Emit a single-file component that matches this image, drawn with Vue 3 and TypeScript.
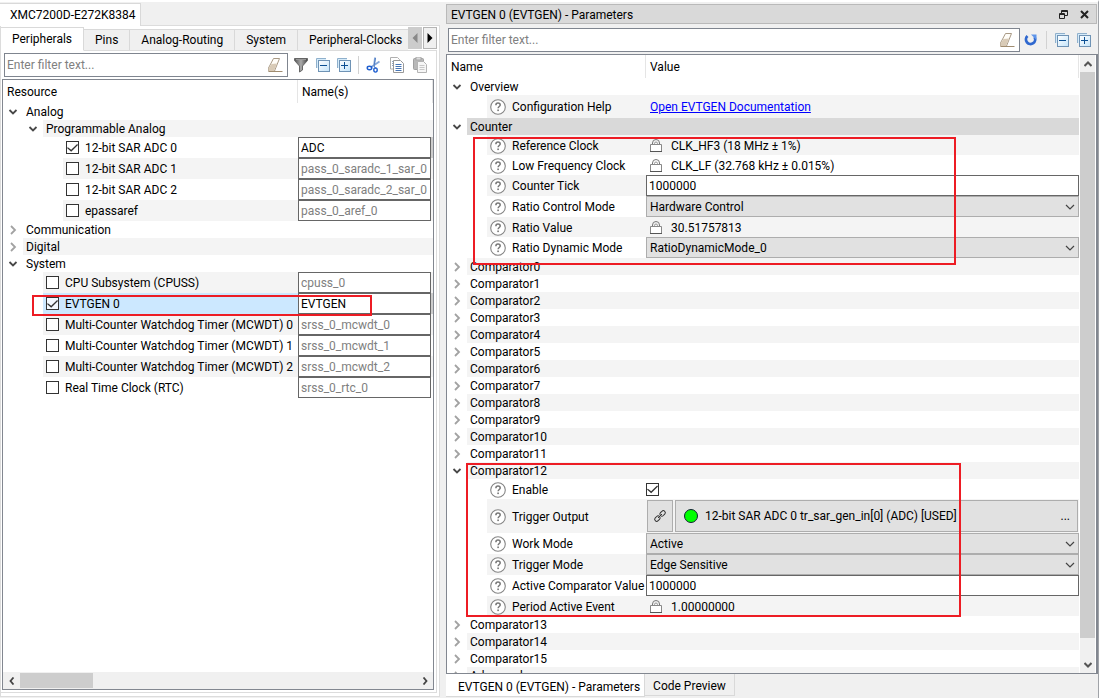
<script setup lang="ts">
import { ref } from 'vue'

interface ResourceRow {
  label: string
  level: number
  open?: boolean
  leaf?: boolean
  checked?: boolean
  name?: string
  selected?: boolean
}

interface ParamRow {
  label: string
  kind: 'group' | 'link' | 'locked' | 'text' | 'select' | 'check' | 'trigger'
  value?: string
  open?: boolean
  height?: 'h20' | 'h21' | 'h23' | 'h34'
  current?: boolean
}

const tabs = ['Peripherals', 'Pins', 'Analog-Routing', 'System', 'Peripheral-Clocks']
const activeTab = ref('Peripherals')
const leftFilter = ref('')
const rightFilter = ref('')

const resources = ref<ResourceRow[]>([
  { label: 'Analog', level: 0, open: true },
  { label: 'Programmable Analog', level: 1, open: true },
  { label: '12-bit SAR ADC 0', level: 2, leaf: true, checked: true, name: 'ADC' },
  { label: '12-bit SAR ADC 1', level: 2, leaf: true, checked: false, name: 'pass_0_saradc_1_sar_0' },
  { label: '12-bit SAR ADC 2', level: 2, leaf: true, checked: false, name: 'pass_0_saradc_2_sar_0' },
  { label: 'epassaref', level: 2, leaf: true, checked: false, name: 'pass_0_aref_0' },
  { label: 'Communication', level: 0, open: false },
  { label: 'Digital', level: 0, open: false },
  { label: 'System', level: 0, open: true },
  { label: 'CPU Subsystem (CPUSS)', level: 1, leaf: true, checked: false, name: 'cpuss_0' },
  { label: 'EVTGEN 0', level: 1, leaf: true, checked: true, name: 'EVTGEN', selected: true },
  { label: 'Multi-Counter Watchdog Timer (MCWDT) 0', level: 1, leaf: true, checked: false, name: 'srss_0_mcwdt_0' },
  { label: 'Multi-Counter Watchdog Timer (MCWDT) 1', level: 1, leaf: true, checked: false, name: 'srss_0_mcwdt_1' },
  { label: 'Multi-Counter Watchdog Timer (MCWDT) 2', level: 1, leaf: true, checked: false, name: 'srss_0_mcwdt_2' },
  { label: 'Real Time Clock (RTC)', level: 1, leaf: true, checked: false, name: 'srss_0_rtc_0' },
])

const comparators = (from: number, to: number): ParamRow[] =>
  Array.from({ length: to - from + 1 }, (_, i) => ({
    label: `Comparator${from + i}`,
    kind: 'group' as const,
    open: false,
  }))

const params = ref<ParamRow[]>([
  { label: 'Overview', kind: 'group', open: true },
  { label: 'Configuration Help', kind: 'link', value: 'Open EVTGEN Documentation', height: 'h23' },
  { label: 'Counter', kind: 'group', open: true, current: true },
  { label: 'Reference Clock', kind: 'locked', value: 'CLK_HF3 (18 MHz ± 1%)', height: 'h20' },
  { label: 'Low Frequency Clock', kind: 'locked', value: 'CLK_LF (32.768 kHz ± 0.015%)', height: 'h20' },
  { label: 'Counter Tick', kind: 'text', value: '1000000', height: 'h21' },
  { label: 'Ratio Control Mode', kind: 'select', value: 'Hardware Control', height: 'h21' },
  { label: 'Ratio Value', kind: 'locked', value: '30.51757813', height: 'h20' },
  { label: 'Ratio Dynamic Mode', kind: 'select', value: 'RatioDynamicMode_0', height: 'h21' },
  ...comparators(0, 11),
  { label: 'Comparator12', kind: 'group', open: true },
  { label: 'Enable', kind: 'check', height: 'h20' },
  { label: 'Trigger Output', kind: 'trigger', value: '12-bit SAR ADC 0 tr_sar_gen_in[0] (ADC) [USED]', height: 'h34' },
  { label: 'Work Mode', kind: 'select', value: 'Active', height: 'h21' },
  { label: 'Trigger Mode', kind: 'select', value: 'Edge Sensitive', height: 'h21' },
  { label: 'Active Comparator Value', kind: 'text', value: '1000000', height: 'h21' },
  { label: 'Period Active Event', kind: 'locked', value: '1.00000000', height: 'h20' },
  ...comparators(13, 15),
  { label: 'Advanced', kind: 'group', open: false },
])
const enabled = ref(true)
</script>

<template>
  <div class="app">
    <svg class="defs" aria-hidden="true">
      <defs>
        <linearGradient id="gFunnel" x1="0" x2="1"><stop offset="0" stop-color="#555" /><stop offset=".5" stop-color="#aaa" /><stop offset="1" stop-color="#444" /></linearGradient>
        <linearGradient id="gBox" x1="0" x2="1" y1="0" y2="1"><stop offset="0" stop-color="#fff" /><stop offset="1" stop-color="#c4e4fa" /></linearGradient>
        <symbol id="i-eraser" viewBox="0 0 16 16">
          <path d="M6.500 1.500h6l-5 12.500h-6v-3z" fill="#fffdf8" stroke="#a99a86" />
          <path d="M4.500 7l5.500-.5-3 7.500H1.500v-2.500z" fill="#d9cbb7" />
          <path d="M1.500 14.500H15.500" stroke="#a08c70" />
        </symbol>
        <symbol id="i-funnel" viewBox="0 0 16 16">
          <path d="M1.500 1.500h13v2L9.500 9v4l-3 2V9l-5-5.500z" fill="url(#gFunnel)" stroke="#666" />
          <path d="M3 2.500h10" stroke="#999" />
        </symbol>
        <symbol id="i-collapse" viewBox="0 0 14 14">
          <path d="M.5 10V.5H10" fill="none" stroke="#8fb0cc" /><path d="M1 1h9v2H3v7H1z" fill="#d5ebfa" />
          <rect x="2.500" y="2.500" width="11" height="11" fill="url(#gBox)" stroke="#6f93b5" />
          <path d="M4 7.500h7" stroke="#0c4f93" />
        </symbol>
        <symbol id="i-expand" viewBox="0 0 14 14">
          <path d="M.5 10V.5H10" fill="none" stroke="#8fb0cc" /><path d="M1 1h9v2H3v7H1z" fill="#d5ebfa" />
          <rect x="2.500" y="2.500" width="11" height="11" fill="url(#gBox)" stroke="#6f93b5" />
          <path d="M4 7.500h7M7.500 4v7" stroke="#0c4f93" />
        </symbol>
        <symbol id="i-cut" viewBox="0 0 16 16">
          <path d="M9 .5 8 9M13.500 4.500 4.500 10.500" stroke="#84a6d8" stroke-width="1.800" fill="none" />
          <path d="M9.500 1 8 9l2 3" stroke="#4f7cc4" fill="none" />
          <ellipse cx="3.500" cy="11" rx="2.300" ry="1.700" fill="none" stroke="#1f5fd0" stroke-width="1.400" />
          <ellipse cx="9.500" cy="13" rx="1.700" ry="2.100" fill="none" stroke="#1f5fd0" stroke-width="1.400" />
        </symbol>
        <symbol id="i-copy" viewBox="0 0 16 16">
          <path d="M1.500.5h7l2 2v9.500h-9z" fill="#fff" stroke="#b0b0b0" />
          <path d="M3 4.500h2M3 6.500h2M3 8.500h2" stroke="#8fa6c8" />
          <path d="M4.500 3.500h7l3 3v9h-10z" fill="#fff" stroke="#999" />
          <path d="M6.500 7.500h6M6.500 9.500h6M6.500 11.500h6M6.500 13.500h6" stroke="#4674b4" />
        </symbol>
        <symbol id="i-paste" viewBox="0 0 16 16">
          <rect x="1.500" y="1.500" width="10" height="11" rx="1" fill="#b8b8b8" stroke="#a0a0a0" />
          <rect x="4" y="0" width="5" height="3" fill="#ddd" stroke="#a8a8a8" />
          <path d="M5.500 4.500h6l3 3v8h-9z" fill="#f6f6f6" stroke="#b4b4b4" />
          <path d="M7.500 8.500h5M7.500 10.500h5M7.500 12.500h5" stroke="#c8c8c8" />
        </symbol>
        <symbol id="i-reset" viewBox="0 0 14 14">
          <path d="M3.500 3a4.600 4.600 0 1 0 7 1" fill="none" stroke="#2f68cf" stroke-width="2.800" />
          <path d="M7 1.500h5.500V7z" fill="#5f95ea" />
        </symbol>
        <symbol id="i-down" viewBox="0 0 10 10"><path d="M1.500 3 5 6.500 8.500 3" fill="none" stroke="#484848" stroke-width="1.800" /></symbol>
        <symbol id="i-right" viewBox="0 0 10 10"><path d="M3 1 7 5l-4 4" fill="none" stroke="#a2a2a2" stroke-width="1.800" /></symbol>
        <symbol id="i-lock" viewBox="0 0 14 14">
          <path d="M3.500 5.500V4a3.500 3.500 0 0 1 7 0v1.500" fill="none" stroke="#777" />
          <path d="M5.500 5.500V4.500a1.500 1.500 0 0 1 3 0v1" fill="none" stroke="#999" />
          <path d="M1.500 5.500h11v7h-11z" fill="#fff" stroke="#888" />
          <path d="M1 12.500h12" stroke="#555" />
        </symbol>
        <symbol id="i-help" viewBox="0 0 16 16">
          <circle cx="8" cy="8" r="7.300" fill="#fff" stroke="#858585" stroke-width="1.100" />
          <path d="M5.900 6.200c0-1.400.9-2.100 2.100-2.100s2.200.7 2.200 1.900c0 1.500-2.100 1.600-2.100 3.300" fill="none" stroke="#777" stroke-width="1.500" />
          <rect x="7.300" y="10.500" width="1.600" height="1.600" fill="#777" />
        </symbol>
      </defs>
    </svg>

    <section class="left">
      <div class="doc-tab">XMC7200D-E272K8384</div>
      <div class="frame">
        <nav class="tabs" role="tablist">
          <button
            v-for="t in tabs" :key="t" role="tab" class="tab"
            :class="{ active: t === activeTab }" :aria-selected="t === activeTab"
            @click="activeTab = t"
          >{{ t }}</button>
          <span class="tab-scroll">
            <button class="off" aria-label="Scroll tabs left" disabled><svg width="6" height="10" viewBox="0 0 6 10"><path d="M5.500 0v10L.5 5z" fill="#888" /></svg></button>
            <button aria-label="Scroll tabs right"><svg width="6" height="10" viewBox="0 0 6 10"><path d="M.5 0v10l5-5z" fill="#000" /></svg></button>
          </span>
        </nav>
        <div class="pane">
          <div class="toolbar">
            <div class="filter">
              <input v-model="leftFilter" type="text" placeholder="Enter filter text..." aria-label="Filter resources">
              <button class="icon" aria-label="Clear filter"><svg width="16" height="16"><use href="#i-eraser" /></svg></button>
            </div>
            <button class="icon" aria-label="Filter"><svg width="16" height="16"><use href="#i-funnel" /></svg></button>
            <button class="icon" aria-label="Collapse all"><svg width="14" height="14"><use href="#i-collapse" /></svg></button>
            <button class="icon" aria-label="Expand all"><svg width="14" height="14"><use href="#i-expand" /></svg></button>
            <span class="sep"></span>
            <button class="icon" aria-label="Cut"><svg width="16" height="16"><use href="#i-cut" /></svg></button>
            <button class="icon" aria-label="Copy"><svg width="16" height="16"><use href="#i-copy" /></svg></button>
            <button class="icon" aria-label="Paste"><svg width="16" height="16"><use href="#i-paste" /></svg></button>
          </div>
          <div class="tree">
            <div class="tree-body">
              <table class="grid resources">
                <colgroup><col class="c-name"><col></colgroup>
                <thead>
                  <tr><th>Resource</th><th>Name(s)</th></tr>
                </thead>
                <tbody>
                  <tr v-for="(r, i) in resources" :key="r.label" :class="{ leaf: r.leaf, alt: i % 2 === 1, selected: r.selected }">
                    <td>
                      <div class="cell" :class="'l' + r.level">
                        <span class="gutter">
                          <button v-if="!r.leaf" class="twisty" :aria-label="'Toggle ' + r.label" @click="r.open = !r.open">
                            <svg width="10" height="10"><use :href="r.open ? '#i-down' : '#i-right'" /></svg>
                          </button>
                        </span>
                        <label v-if="r.leaf" class="fill"><input v-model="r.checked" type="checkbox">{{ r.label }}</label>
                        <span v-else class="fill">{{ r.label }}</span>
                      </div>
                    </td>
                    <td class="value">
                      <div v-if="r.leaf" class="name-edit" :class="{ on: r.checked }">
                        <input v-model="r.name" type="text" class="edit" :aria-label="r.label + ' name'" :disabled="!r.checked">
                      </div>
                    </td>
                  </tr>
                </tbody>
              </table>
              <div class="mark mark-resource"></div>
            </div>
            <div class="hscroll">
              <button aria-label="Scroll left"><svg width="6" height="8" viewBox="0 0 6 8"><path d="M4.500.5 1.500 4l3 3.500" fill="none" stroke="#444" stroke-width="1.800" /></svg></button>
              <span class="hthumb"></span>
              <button aria-label="Scroll right"><svg width="6" height="8" viewBox="0 0 6 8"><path d="M1.500.5 4.500 4l-3 3.500" fill="none" stroke="#444" stroke-width="1.800" /></svg></button>
            </div>
          </div>
        </div>
      </div>
    </section>

    <section class="right">
      <header class="title">
        <span>EVTGEN 0 (EVTGEN) - Parameters</span>
        <button aria-label="Float"><svg width="9" height="9" viewBox="0 0 9 9"><path d="M2.500 3V.5h6v5H6M2.500 1.500h6" fill="none" stroke="#222" /><path d="M.5 3.500h5v5h-5zM.5 4.500h5" fill="none" stroke="#222" /></svg></button>
        <button aria-label="Close"><svg width="9" height="9" viewBox="0 0 9 9"><path d="m1 1 7 7M8 1 1 8" stroke="#222" stroke-width="2" /></svg></button>
      </header>
      <div class="toolbar rt">
        <div class="filter">
          <input v-model="rightFilter" type="text" placeholder="Enter filter text..." aria-label="Filter parameters">
          <button class="icon" aria-label="Clear filter"><svg width="16" height="16"><use href="#i-eraser" /></svg></button>
        </div>
        <button class="icon" aria-label="Reset"><svg width="14" height="14"><use href="#i-reset" /></svg></button>
        <span class="sep"></span>
        <button class="icon" aria-label="Collapse all"><svg width="14" height="14"><use href="#i-collapse" /></svg></button>
        <button class="icon" aria-label="Expand all"><svg width="14" height="14"><use href="#i-expand" /></svg></button>
      </div>
      <div class="tree params">
        <div class="tree-body">
          <table class="grid">
            <colgroup><col class="c-param"><col></colgroup>
            <thead>
              <tr><th>Name</th><th>Value</th></tr>
            </thead>
            <tbody>
              <tr v-for="(p, i) in params" :key="p.label" :class="[p.height, { alt: i % 2 === 1, current: p.current }]">
                <td>
                  <div class="cell" :class="p.kind === 'group' ? 'l0' : 'l1'">
                    <span class="gutter">
                      <button v-if="p.kind === 'group'" class="twisty" :aria-label="'Toggle ' + p.label" @click="p.open = !p.open">
                        <svg width="10" height="10"><use :href="p.open ? '#i-down' : '#i-right'" /></svg>
                      </button>
                    </span>
                    <span v-if="p.kind === 'group'" class="fill">{{ p.label }}</span>
                    <label v-else class="fill" :for="'p' + i"><svg width="16" height="16"><use href="#i-help" /></svg>{{ p.label }}</label>
                  </div>
                </td>
                <td class="value">
                  <a v-if="p.kind === 'link'" :id="'p' + i" class="doc" href="#documentation">{{ p.value }}</a>
                  <output v-else-if="p.kind === 'locked'" :id="'p' + i" class="locked"><svg width="14" height="14"><use href="#i-lock" /></svg>{{ p.value }}</output>
                  <input v-else-if="p.kind === 'text'" :id="'p' + i" v-model="p.value" class="edit" type="text">
                  <div v-else-if="p.kind === 'select'" class="combo">
                    <select :id="'p' + i"><option>{{ p.value }}</option></select>
                    <svg width="10" height="6" viewBox="0 0 10 6"><path d="m1 1 4 4 4-4" fill="none" stroke="#444" stroke-width="1.200" /></svg>
                  </div>
                  <input v-else-if="p.kind === 'check'" :id="'p' + i" v-model="enabled" type="checkbox">
                  <div v-else-if="p.kind === 'trigger'" class="trigger">
                    <button class="link-btn" aria-label="Go to linked resource">
                      <svg width="14" height="14" viewBox="0 0 14 14"><g fill="none" stroke="#333"><rect x="-3" y="-2" width="6" height="4" rx="2" transform="translate(9.600 4.400) rotate(-45)" /><rect x="-3" y="-2" width="6" height="4" rx="2" transform="translate(4.400 9.600) rotate(-45)" /><path d="m5 9 4-4" /></g></svg>
                    </button>
                    <button :id="'p' + i" class="signal"><i class="dot"></i><span>{{ p.value }}</span><span class="more">...</span></button>
                  </div>
                </td>
              </tr>
            </tbody>
          </table>
          <div class="mark mark-counter"></div>
          <div class="mark mark-comparator"></div>
        </div>
        <div class="vscroll">
          <button aria-label="Scroll up"><svg width="8" height="6" viewBox="0 0 8 6"><path d="M.5 5 4 1.500 7.500 5" fill="none" stroke="#555" stroke-width="2" /></svg></button>
          <span class="vthumb"></span>
          <button aria-label="Scroll down"><svg width="8" height="6" viewBox="0 0 8 6"><path d="M.5 1 4 4.500 7.500 1" fill="none" stroke="#555" stroke-width="2" /></svg></button>
        </div>
      </div>
      <nav class="bottom-tabs" role="tablist">
        <button role="tab" class="active" aria-selected="true">EVTGEN 0 (EVTGEN) - Parameters</button>
        <button role="tab" aria-selected="false">Code Preview</button>
      </nav>
    </section>
  </div>
</template>

<style>
body {
  margin: 0;
  background: #f0f0f0;
}
</style>

<style scoped>
* {
  box-sizing: border-box;
}
.app {
  display: grid;
  grid-template-columns: 440px minmax(0, 1fr);
  column-gap: 6px;
  height: 100vh;
  border-top: 2px solid #fff;
  border-right: 1px solid #a0a3a8;
  background: #f0f0f0;
  color: #000;
  font: 12px/16px Roboto, "Open Sans", sans-serif;
  overflow: hidden;
}
.defs {
  position: absolute;
  width: 0;
  height: 0;
}
button,
input,
select {
  margin: 0;
  padding: 0;
  border: 0;
  border-radius: 0;
  background: none;
  color: inherit;
  font: inherit;
}
svg {
  display: block;
  flex: none;
}

/* left panel */
.left {
  display: flex;
  flex-direction: column;
  min-height: 0;
  padding: 1px 0;
}
.doc-tab {
  align-self: flex-start;
  z-index: 1;
  height: 23px;
  margin-bottom: -1px;
  padding: 3px 4px 0 10px;
  border: 1px solid #d9d9d9;
  border-width: 1px 1px 0 0;
  background: #fff;
}
.frame {
  flex: 1;
  min-height: 0;
  display: flex;
  flex-direction: column;
  padding: 1px 2px 3px 0;
  border: 1px solid #dcdcdc;
  background: #fff;
}
.tabs {
  display: flex;
  align-items: flex-end;
  height: 24px;
  margin-bottom: -1px;
  background: #fff;
  overflow: hidden;
}
.tab {
  flex: none;
  height: 22px;
  padding: 0 11px;
  border: 1px solid #d9d9d9;
  border-left: 0;
  background: #f0f0f0;
  white-space: nowrap;
}
.tab.active {
  position: relative;
  z-index: 1;
  height: 24px;
  border-bottom-color: #fff;
  background: #fff;
}
.tab:nth-child(5) {
  flex: 1;
  min-width: 0;
  padding-right: 0;
  overflow: hidden;
  border-right: 0;
  text-align: left;
}
.tab-scroll {
  display: flex;
  align-self: flex-start;
  gap: 1px;
}
.tab-scroll button {
  display: grid;
  place-items: center;
  width: 14px;
  height: 22px;
  border: 1px solid #b4b4b4;
  background: #f0f0f0;
}
.tab-scroll .off {
  border-color: #ccc;
  background: #ccc;
}
.pane {
  flex: 1;
  min-height: 0;
  display: flex;
  flex-direction: column;
  padding: 2px 2px 2px 1px;
  border: 1px solid #dcdcdc;
  border-left: 0;
}
.toolbar {
  display: flex;
  align-items: center;
  gap: 7px;
  height: 24px;
  margin: 0 6px 2px 2px;
}
.filter {
  flex: 1;
  display: flex;
  align-items: center;
  height: 24px;
  margin-right: -2px;
  padding: 0 4px 0 2px;
  border: 1px solid #7f858f;
  background: #fff;
}
.filter input {
  flex: 1;
  min-width: 0;
  outline: 0;
}
.filter input::placeholder {
  color: #808080;
  opacity: 1;
}
.sep {
  width: 1px;
  height: 18px;
  background: #d2d2d2;
}
.tree {
  flex: 1;
  min-height: 0;
  display: flex;
  flex-direction: column;
  border: 1px solid #828790;
  background: #fff;
}
.tree-body {
  position: relative;
  flex: 1;
  min-width: 0;
  min-height: 0;
  overflow: hidden;
}
.grid {
  width: 100%;
  table-layout: fixed;
  border-spacing: 0;
}
.c-name {
  width: 295px;
}
.c-param {
  width: 199px;
}
th {
  height: 23px;
  padding: 0 4px;
  border-right: 1px solid #e5e5e5;
  font-weight: 400;
  text-align: left;
}
td {
  height: 17px;
  padding: 0;
  white-space: nowrap;
}
.resources .leaf td {
  height: 21px;
}
.cell {
  display: flex;
  height: 17px;
}
.leaf .cell,
.h21 .cell {
  height: 21px;
}
.h20 .cell {
  height: 20px;
}
.h23 .cell {
  height: 23px;
}
.h34 .cell {
  height: 34px;
}
.gutter {
  flex: none;
  display: flex;
  justify-content: flex-end;
  width: 20px;
}
.l1 .gutter {
  width: 40px;
}
.l2 .gutter {
  width: 60px;
}
.twisty {
  display: grid;
  place-items: center;
  width: 20px;
  height: 17px;
}
.fill {
  flex: 1;
  min-width: 0;
  display: flex;
  align-items: center;
  gap: 6px;
  padding-left: 3px;
}
.h20 .fill,
.h34 .fill,
.h20 .locked {
  padding-top: 1px;
}
.alt .fill,
.alt .value {
  background: #f4f4f4;
}
.selected .fill {
  background: #cce8ff;
}
.current .fill,
.current .value {
  background: #d9d9d9;
}
input[type='checkbox'] {
  appearance: none;
  position: relative;
  display: block;
  flex: none;
  width: 13px;
  height: 13px;
  border: 1px solid #333;
  background: #fff;
}
.selected input[type='checkbox'] {
  background: #f3f9ff;
}
input[type='checkbox']:checked::after {
  content: '';
  position: absolute;
  inset: 1px 0 1px 0;
  background: #333;
  clip-path: polygon(8% 46%, 38% 76%, 92% 12%, 100% 22%, 38% 96%, 0 56%);
}
.edit {
  display: block;
  width: 100%;
  height: 21px;
  padding: 0 2px;
  border: 1px solid #666;
  background: #fff;
}
.edit:disabled {
  color: #808080;
}
.name-edit {
  padding-right: 2px;
}
.name-edit.on {
  background: #cdcdcd;
}
.hscroll {
  display: flex;
  height: 17px;
  background: #f0f0f0;
}
.hscroll button {
  display: grid;
  place-items: center;
  width: 17px;
}
.hscroll button:last-child {
  margin-left: auto;
}
.hthumb {
  width: 17%;
  margin: 1px 0;
  background: #cdcdcd;
}

/* right panel */
.right {
  display: flex;
  flex-direction: column;
  min-width: 0;
  min-height: 0;
  padding-top: 2px;
}
.title {
  display: flex;
  align-items: center;
  gap: 12px;
  height: 20px;
  margin: 0 1px 4px 0;
  padding: 1px 7px 0 4px;
  border: 1px solid #b9b9b9;
  background: #d9d9d9;
}
.title span {
  flex: 1;
}
.toolbar.rt {
  gap: 8px;
  margin-right: 7px;
}
.rt .filter {
  margin-right: -4px;
}
.params {
  flex-direction: row;
  border-right-width: 2px;
}
.params .tree-body {
  margin-right: 1px;
}
.value {
  vertical-align: middle;
}
.doc {
  margin-left: 4px;
  color: #0000ff;
}
.locked {
  display: flex;
  align-items: center;
  gap: 8px;
  padding-left: 3px;
}
.combo {
  position: relative;
  height: 21px;
}
.combo select {
  appearance: none;
  display: block;
  width: 100%;
  height: 21px;
  padding: 0 20px 0 3px;
  border: 1px solid #adadad;
  background: #e1e1e1;
}
.combo svg {
  position: absolute;
  top: 8px;
  right: 4px;
  pointer-events: none;
}
.trigger {
  display: flex;
  gap: 2px;
  height: 32px;
  padding: 0 1px;
}
.trigger button {
  display: flex;
  align-items: center;
  border: 1px solid #adadad;
  background: #e1e1e1;
}
.link-btn {
  flex: none;
  justify-content: center;
  width: 26px;
}
.signal {
  flex: 1;
  min-width: 0;
  gap: 7px;
  padding: 0 7px 0 8px;
  white-space: nowrap;
}
.more {
  margin-left: auto;
}
.dot {
  width: 14px;
  height: 14px;
  border: 1px solid #123;
  border-radius: 50%;
  background: #0f0;
}
.vscroll {
  flex: none;
  display: flex;
  flex-direction: column;
  width: 15px;
  margin-right: 1px;
  background: #f0f0f0;
}
.vscroll button {
  display: grid;
  place-items: center;
  height: 17px;
}
.vthumb {
  flex: 1;
  margin-bottom: 18px;
  background: #cdcdcd;
}
.bottom-tabs {
  display: flex;
  align-items: flex-start;
  height: 24px;
}
.bottom-tabs button {
  height: 22px;
  padding: 3px 8px 0;
  border: 1px solid #d9d9d9;
  border-width: 0 1px 1px 0;
}
.bottom-tabs .active {
  height: 23px;
  padding: 4px 4px 0 12px;
  background: #fff;
}

/* highlight frames drawn over the trees */
.mark {
  position: absolute;
  border: 2px solid #ed1c24;
  pointer-events: none;
}
.mark-resource {
  top: 215px;
  left: 29px;
  width: 340px;
  height: 21px;
}
.mark-counter {
  top: 82px;
  left: 26px;
  width: 483px;
  height: 128px;
}
.mark-comparator {
  top: 408px;
  left: 19px;
  width: 495px;
  height: 154px;
}
</style>
